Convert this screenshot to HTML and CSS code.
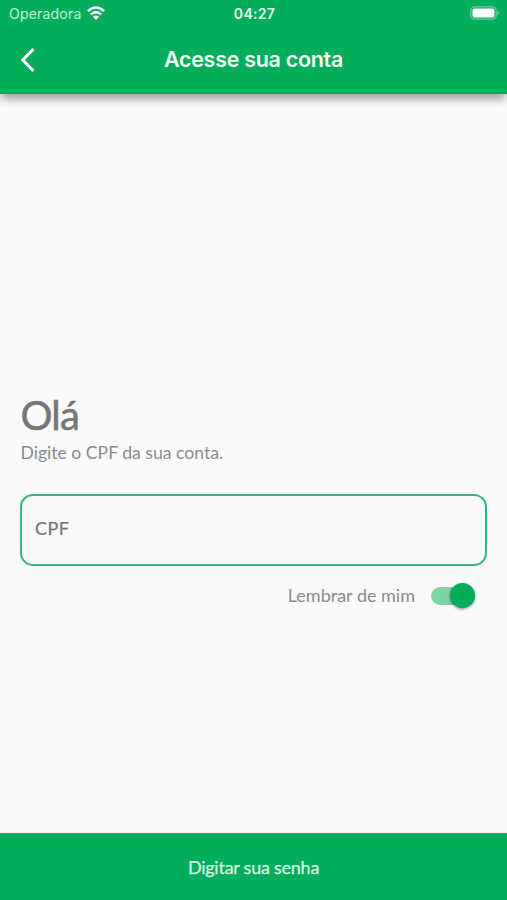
FILE: index.html
```html
<!DOCTYPE html>
<html lang="pt-BR">
<head>
<meta charset="utf-8">
<title>Acesse sua conta</title>
<link rel="stylesheet" href="styles.css">
</head>
<body>
<div class="screen">
  <header class="header">
    <div class="status">
      <div class="carrier"><span>Operadora</span>
        <svg class="wifi" width="18" height="14" viewBox="0 0 18 14" fill="none" stroke="#fff" stroke-width="2.5"><path d="M.9 5.1Q9-2.1 17.1 5.1M3.8 8.4Q9 3.9 14.2 8.4"/><path d="M9 14 5.9 10.8Q9 8.3 12.1 10.8Z" fill="#fff" stroke="none"/></svg>
      </div>
      <time class="clock">04:27</time>
      <svg class="battery" width="30" height="14" viewBox="0 0 30 14"><rect x=".8" y=".8" width="25.4" height="12.4" rx="3.7" fill="none" stroke="#fff" stroke-opacity=".4" stroke-width="1.2"/><rect x="2.5" y="2.4" width="22" height="9.2" rx="2" fill="#fff"/><path d="M27.6 5Q30.2 7 27.6 9Z" fill="#fff" fill-opacity=".5"/></svg>
    </div>
    <div class="bar">
      <svg class="back" width="16" height="26" viewBox="0 0 16 26" fill="none" stroke="#fff" stroke-width="3"><path d="M13.5 2 2.8 13 13.5 24"/></svg>
      <h1 class="title">Acesse sua conta</h1>
    </div>
  </header>
  <main class="content">
    <h2 class="hello">Olá</h2>
    <p class="hint">Digite o CPF da sua conta.</p>
    <div class="field"><span class="label">CPF</span></div>
    <div class="remember"><span class="remember-text">Lembrar de mim</span><span class="switch"><span class="thumb"></span></span></div>
  </main>
  <footer class="action"><span class="action-text">Digitar sua senha</span></footer>
</div>
</body>
</html>
```
FILE: styles.css
```css
* { box-sizing: border-box; margin: 0; padding: 0; }
body { background: #fafafa; font-family: Lato, sans-serif; color: #757575; }
svg { display: block; }
.screen { height: 900px; display: flex; flex-direction: column; overflow: hidden; }
.header { height: 94px; background: #04ad5c; color: #fff; box-shadow: 0 6px 9px -1px rgba(0,0,0,.36); }
.status { height: 27px; display: grid; grid-template-columns: 1fr auto 1fr; align-items: center; padding: 0 7px 0 9px; font-family: Inter, sans-serif; }
.carrier { display: flex; align-items: center; gap: 6px; font-size: 14px; letter-spacing: .2px; color: #c4f3d8; }
.wifi { margin-top: -1px; }
.clock { font-size: 14px; font-weight: 600; letter-spacing: .3px; color: #e5fff0; }
.battery { justify-self: end; margin-top: -1px; }
.bar { height: 65px; display: grid; grid-template-columns: 40px 1fr 40px; align-items: center; padding: 0 20px; }
.title { margin-top: -2px; text-align: center; font: 600 21.5px/30px Inter, sans-serif; letter-spacing: -.3px; white-space: nowrap; color: #effff5; }
.content { flex: 1; padding: 297px 20px 0 20.5px; }
.hello { font-size: 40px; line-height: 48px; font-weight: 400; letter-spacing: -.8px; -webkit-text-stroke: .5px #757575; }
.hint { font-size: 17.6px; line-height: 24px; color: #8b8b8b; margin-top: 2px; }
.field { height: 72px; margin: 29px 0 0 -.5px; border: 2px solid #3ab577; border-radius: 13px; padding: 0 13px 4px; display: flex; align-items: center; }
.label { font-size: 18px; letter-spacing: .4px; -webkit-text-stroke: .2px #757575; }
.remember { height: 59px; padding-right: 12px; display: flex; justify-content: flex-end; align-items: center; gap: 16px; }
.remember-text { margin-top: -1px; font-size: 18px; color: #8b8b8b; }
.switch { width: 44px; height: 18px; border-radius: 9px; background: #7dd5a6; display: flex; justify-content: flex-end; align-items: center; }
.thumb { flex: none; width: 25px; height: 25px; border-radius: 50%; background: #04ad5c; box-shadow: 0 1px 3px rgba(0,0,0,.45); }
.action { height: 67px; background: #04ad5c; border-top: 1px solid #289e62; display: flex; align-items: center; justify-content: center; }
.action-text { font-size: 18px; letter-spacing: -.25px; color: #d5f8e3; -webkit-text-stroke: .25px #d5f8e3; }
```
